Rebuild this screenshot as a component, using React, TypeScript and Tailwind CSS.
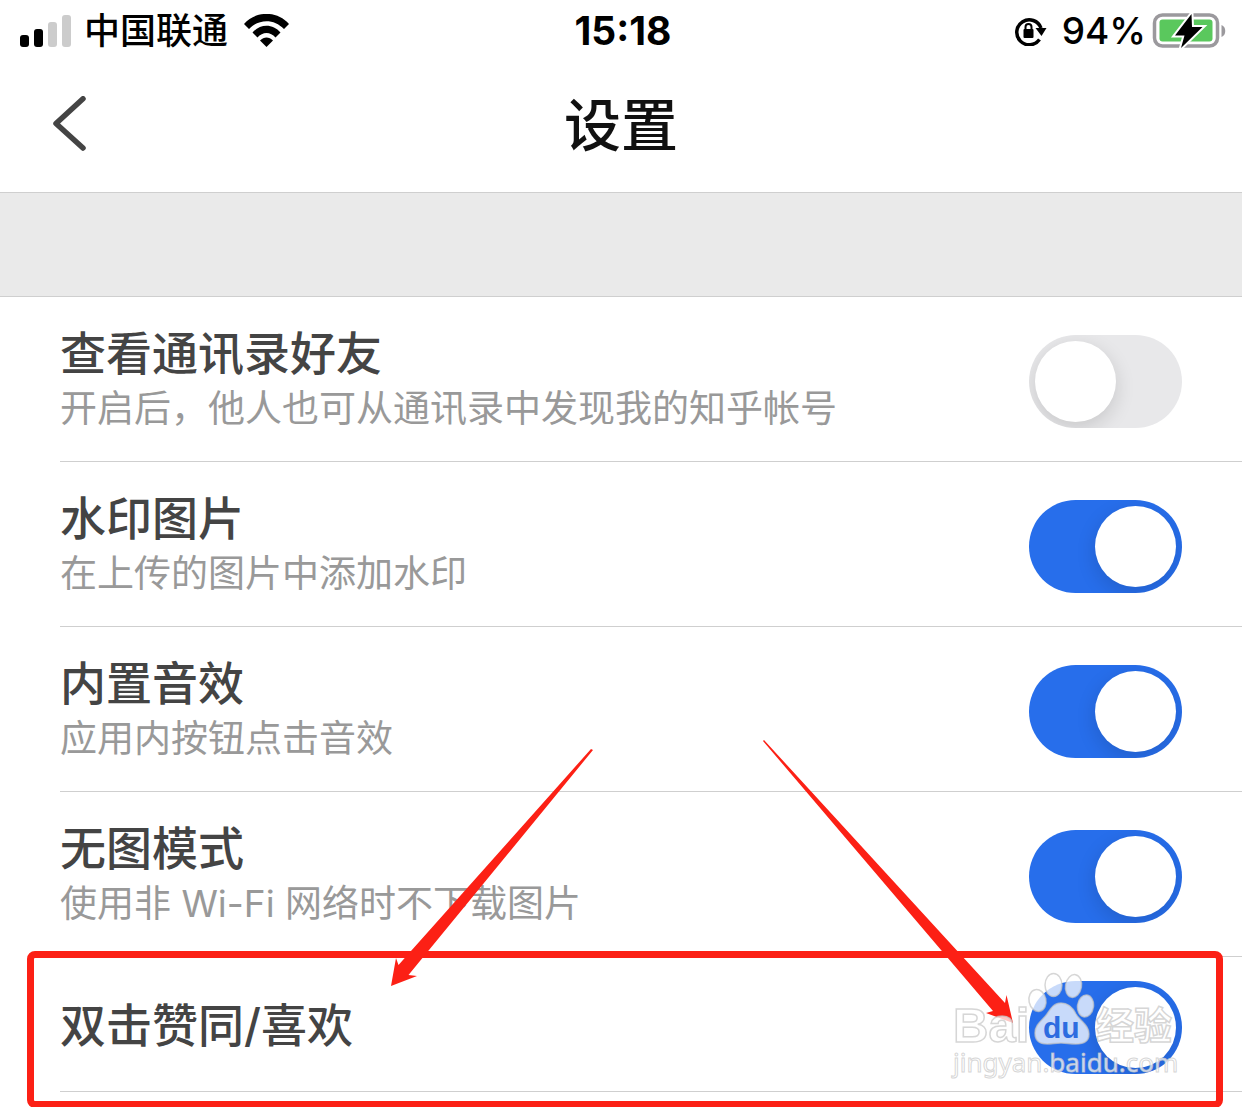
import { useState } from "react";
import clsx from "clsx";

type Setting = {
  id: string;
  title: string;
  note?: string;
  on: boolean;
};

const initialSettings: Setting[] = [
  {
    id: "contacts",
    title: "查看通讯录好友",
    note: "开启后，他人也可从通讯录中发现我的知乎帐号",
    on: false,
  },
  { id: "watermark", title: "水印图片", note: "在上传的图片中添加水印", on: true },
  { id: "sound", title: "内置音效", note: "应用内按钮点击音效", on: true },
  {
    id: "no-image",
    title: "无图模式",
    note: "使用非 Wi-Fi 网络时不下载图片",
    on: true,
  },
  { id: "double-tap", title: "双击赞同/喜欢", on: true },
];

export default function App() {
  const [settings, setSettings] = useState<Setting[]>(initialSettings);

  const toggle = (id: string) => {
    setSettings(settings.map((s) => (s.id === id ? { ...s, on: !s.on } : s)));
  };

  return (
    <div className="overflow-hidden bg-white pb-4 font-['Inter','Noto_Sans_CJK_SC',sans-serif]">
      <StatusBar />
      <header className="grid h-32 grid-cols-[1fr_auto_1fr] items-center pb-1">
        <button aria-label="返回" className="ml-[52px] w-9">
          <svg viewBox="0 0 36 60" className="h-[60px] w-9" fill="none">
            <path
              d="M31 2.800 4 27.500 31 52"
              stroke="#444"
              strokeWidth="5.500"
              strokeLinecap="round"
              strokeLinejoin="round"
            />
          </svg>
        </button>
        <h1 className="text-[57px] leading-[64px] font-medium text-[#111]">设置</h1>
      </header>
      <div className="h-[105px] border-y border-[#cfcfcf] bg-[#eaeaea]" />
      <ul>
        {settings.map((setting) => (
          <SettingRow
            key={setting.id}
            setting={setting}
            highlighted={setting.id === "double-tap"}
            onToggle={() => toggle(setting.id)}
          />
        ))}
      </ul>
    </div>
  );
}

function SettingRow({
  setting,
  highlighted,
  onToggle,
}: {
  setting: Setting;
  highlighted: boolean;
  onToggle: () => void;
}) {
  return (
    <li className="relative">
      <div
        className={clsx(
          "ml-[60px] flex items-center justify-between border-b border-[#cfcfcf] pr-[60px]",
          setting.note ? "pt-7 pb-6" : "pt-6 pb-[17px]",
        )}
      >
        <label htmlFor={setting.id} className={clsx(!setting.note && "pb-1.5")}>
          <span className="block text-[46px] leading-[56px] font-medium text-[#444]">
            {setting.title}
          </span>
          {setting.note && (
            <span className="block text-[37px] leading-[56px] text-[#999]">
              {setting.note}
            </span>
          )}
        </label>
        <input
          id={setting.id}
          type="checkbox"
          role="switch"
          checked={setting.on}
          onChange={onToggle}
          className="h-[93px] w-[153px] shrink-0 appearance-none overflow-hidden rounded-full bg-[#e8e8ea] p-1.5 before:block before:size-[81px] before:rounded-full before:bg-white before:shadow-[0_6px_20px_rgba(0,0,0,0.14)] checked:bg-[#276eeb] checked:before:ml-[60px]"
        />
      </div>
      {highlighted && <Callout />}
    </li>
  );
}

function Callout() {
  return (
    <div className="pointer-events-none absolute inset-0">
      <div className="absolute -top-1.5 right-[19px] -bottom-4 left-[27px] rounded-lg border-7 border-[#fc2015]" />
      <svg
        viewBox="0 0 202 238"
        className="absolute -top-52 left-[391px] h-[238px] w-[202px]"
        fill="#fc2015"
      >
        <path d="M200 0 7.500 216 5 209 0 237 26 227 17.500 226 202 1Z" />
      </svg>
      <svg
        viewBox="0 0 250 284"
        className="absolute -top-[217px] right-[229px] h-[284px] w-[250px]"
        fill="#fc2015"
      >
        <path d="M1 0 242 263 243.500 255 250 283 223 273 230 271 0 1Z" />
      </svg>
      <Watermark />
    </div>
  );
}

function Watermark() {
  return (
    <svg
      viewBox="0 0 230 116"
      className="absolute top-3 right-[62px] h-[116px] w-[230px]"
      fill="#fff"
      fillOpacity="0.75"
      stroke="#c4c4c4"
      strokeOpacity="0.7"
      strokeWidth="1.500"
    >
      <text x="3" y="73" className="font-['Liberation_Sans',sans-serif] text-[49px] font-bold">
        Bai
      </text>
      <ellipse cx="87.500" cy="31.500" rx="8.500" ry="11" transform="rotate(-12 87.500 31.500)" />
      <ellipse cx="103.500" cy="16" rx="8.500" ry="11.500" />
      <ellipse cx="123.500" cy="17" rx="8" ry="11.500" transform="rotate(10 123.500 17)" />
      <ellipse cx="135.500" cy="37" rx="8" ry="11" transform="rotate(8 135.500 37)" />
      <path d="M111 34c8 0 12 5 15 11 4 7 13 11 13 20 0 8-6 10-13 10-6 0-10-1-15-1s-9 1-14 1c-7 0-12-3-12-11 0-9 8-13 12-19s7-11 14-11Z" />
      <text
        x="93"
        y="69"
        fill="#2d6ce0"
        fillOpacity="1"
        stroke="none"
        className="font-['Liberation_Sans',sans-serif] text-[30px] font-bold"
      >
        du
      </text>
      <text x="146" y="70" className="font-['Noto_Sans_CJK_SC',sans-serif] text-[38px] font-bold">
        经验
      </text>
      <text
        x="3"
        y="103"
        strokeWidth="1"
        className="font-['Noto_Sans',sans-serif] text-[26px]"
      >
        jingyan.baidu.com
      </text>
    </svg>
  );
}

function StatusBar() {
  return (
    <div className="grid h-16 grid-cols-[1fr_auto_1fr] items-center pr-4 pb-0.5 pl-5 text-black">
      <div className="flex items-center">
        <svg viewBox="0 0 52 33" className="h-[33px] w-[52px]">
          <rect x="0" y="20" width="9" height="12" rx="3" />
          <rect x="14" y="14" width="9" height="18" rx="3" />
          <rect x="28" y="7" width="9" height="25" rx="3" fill="#ccc" />
          <rect x="42" y="0" width="9" height="32" rx="3" fill="#ccc" />
        </svg>
        <span className="ml-3 text-[36px] leading-10 font-medium">中国联通</span>
        <svg viewBox="0 0 46 34" className="ml-4 h-[34px] w-[46px]">
          <path d="M0 10C12-3.500 33-3.500 45 10l-5 5C30 4.500 15 4.500 5 15Z" />
          <path d="M8.500 18.500C16 9.500 29 9.500 36.500 18.500l-5 5c-5-6-13-6-18 0Z" />
          <path d="M16 26.500c4-4 9-4 13 0L22.500 33Z" />
        </svg>
      </div>
      <time className="text-[39px] leading-10 font-bold">15:18</time>
      <div className="flex items-center justify-end">
        <svg viewBox="0 0 34 30" className="h-[30px] w-[34px]" fill="none">
          <path
            d="M25.500 23.500A12.500 12.500 0 1 1 27 12"
            stroke="#000"
            strokeWidth="3.500"
          />
          <path d="M21.500 12h11L27.500 20Z" fill="#000" />
          <rect x="9.500" y="13" width="10" height="9" rx="1" fill="#000" />
          <path d="M11.500 14v-3a3 3 0 0 1 6 0v3" stroke="#000" strokeWidth="2" />
        </svg>
        <span className="ml-3.5 text-[37px] leading-10 font-medium">94%</span>
        <svg viewBox="0 0 74 36" className="ml-1.5 h-9 w-[74px]">
          <rect
            x="2.500"
            y="2"
            width="63"
            height="31"
            rx="8"
            fill="#fff"
            stroke="#9b999d"
            strokeWidth="3.500"
          />
          <rect x="7.500" y="6.500" width="53" height="22" rx="3" fill="#5ac85d" />
          <path d="M69.500 12c5 1.500 5 10.500 0 12Z" fill="#9b999d" />
          <path
            d="M39.500 1 23 22.500h9.500L29 35 50.500 14H40Z"
            stroke="#fff"
            strokeWidth="4"
            paintOrder="stroke"
          />
        </svg>
      </div>
    </div>
  );
}
